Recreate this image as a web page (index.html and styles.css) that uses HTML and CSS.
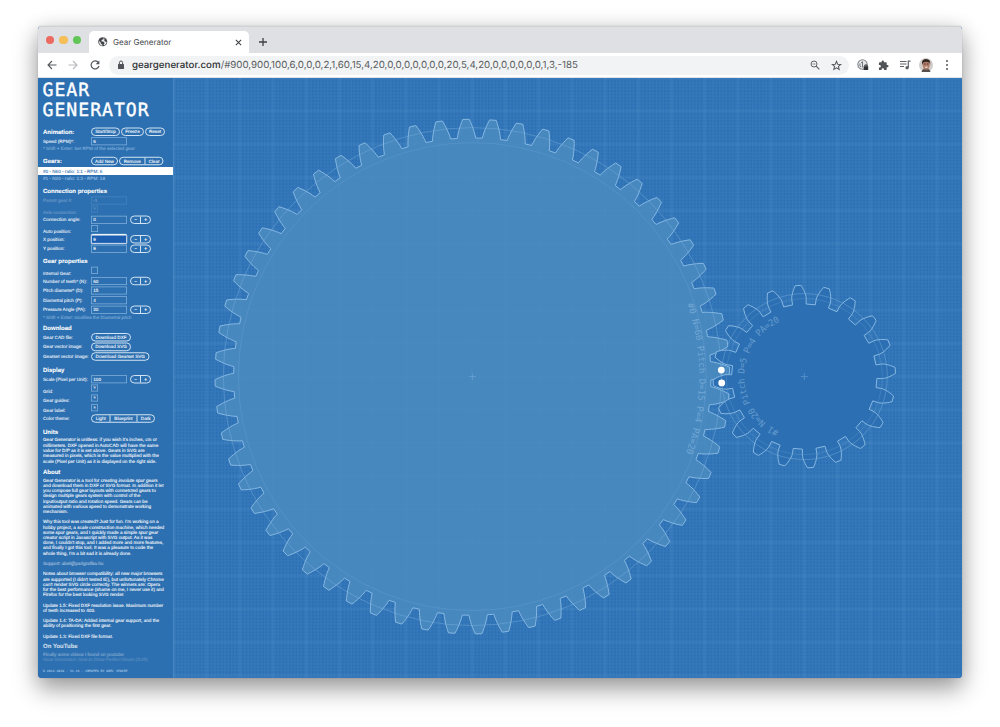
FILE: index.html
```html
<!DOCTYPE html>
<html lang="en">
<head>
<meta charset="utf-8">
<title>Gear Generator</title>
<link rel="stylesheet" href="styles.css">
</head>
<body>
<div class="window">
  <header class="tabstrip">
    <div class="lights"><i class="red"></i><i class="yellow"></i><i class="green"></i></div>
    <div class="tab">
      <svg class="globe" viewBox="0 0 20 20"><circle cx="10" cy="10" r="9.5" fill="#44474b"/><path d="M2 8 L6 12 V14 L9 16 V19 Q2 17 2 8 M8 1 L12 1.500 L11 5 L8 6 L7 9 L12 10 L14 13 L12 15 L13 18 Q18 15 18.500 10 L15 10 L13 7 L14 3" fill="#fff" opacity=".9"/></svg>
      <span class="tabname">Gear Generator</span>
      <svg class="close" viewBox="0 0 8 8"><path d="M1 1 L7 7 M7 1 L1 7" stroke="#3c4043" stroke-width="1.200"/></svg>
    </div>
    <svg class="plus" viewBox="0 0 8 8"><path d="M4 0 V8 M0 4 H8" stroke="#3c4043" stroke-width="1.300"/></svg>
  </header>
  <div class="toolbar">
    <svg class="nav" viewBox="0 0 10 10"><path d="M9.500 5 H1.200 M5 1 L1 5 L5 9" fill="none" stroke="#55585c" stroke-width="1.100"/></svg>
    <svg class="nav" viewBox="0 0 10 10"><path d="M.5 5 H8.800 M5 1 L9 5 L5 9" fill="none" stroke="#b9bbbe" stroke-width="1.100"/></svg>
    <svg class="nav" viewBox="0 0 10 10"><path d="M8.400 2.600 A4 4 0 1 0 9 6" fill="none" stroke="#55585c" stroke-width="1.200"/><path d="M9.400 .5 V4.300 H5.600 Z" fill="#55585c"/></svg>
    <div class="omnibox">
      <svg class="lock" viewBox="0 0 8 10"><rect x="1" y="4" width="6" height="5" rx=".6" fill="#505357"/><path d="M2.400 4 V2.600 a1.600 1.600 0 0 1 3.200 0 V4" fill="none" stroke="#505357"/></svg>
      <span class="url"><b>geargenerator.com</b>/#900,900,100,6,0,0,0,2,1,60,15,4,20,0,0,0,0,0,0,0,20,5,4,20,0,0,0,0,0,0,1,3,-185</span>
      <svg class="mag" viewBox="0 0 10 10"><circle cx="4" cy="4" r="3" fill="none" stroke="#5f6368"/><path d="M6.200 6.200 L9.300 9.300" stroke="#5f6368" stroke-width="1.200"/><path d="M2.600 4 H5.400" stroke="#5f6368" stroke-width=".8"/></svg>
      <svg class="star" viewBox="0 0 24 24"><path d="M12 3 L14.600 9.200 L21.300 9.700 L16.200 14.100 L17.800 20.700 L12 17.200 L6.200 20.700 L7.800 14.100 L2.700 9.700 L9.400 9.200 Z" fill="none" stroke="#55585c" stroke-width="2.200"/></svg>
    </div>
    <svg class="ext" viewBox="0 0 12 12"><circle cx="5.500" cy="5.500" r="4.700" fill="#e5e6e8" stroke="#85888c" stroke-width="1.100"/><path d="M5.500 2.500 V8.500 M4 3.500 H5.500 M3 4.500 a3 3 0 0 0 1 3.500" stroke="#74777b" fill="none"/><rect x="6.700" y="7.200" width="4.500" height="3.800" fill="#303235"/><path d="M7.800 7 V6 h2.300 V7" stroke="#303235" fill="none"/></svg>
    <svg class="ext puzzle" viewBox="0 0 24 24"><path d="M20.500 11H19V7c0-1.100-.9-2-2-2h-4V3.500a2.500 2.500 0 0 0-5 0V5H4a2 2 0 0 0-2 2v3.800h1.500a2.700 2.700 0 0 1 0 5.400H2V20a2 2 0 0 0 2 2h3.800v-1.500a2.700 2.700 0 0 1 5.400 0V22H17a2 2 0 0 0 2-2v-4h1.500a2.500 2.500 0 0 0 0-5z" fill="#505357"/></svg>
    <svg class="ext queue" viewBox="0 0 12 12"><path d="M1 2.500 H7.500 M1 5 H7.500 M1 7.500 H5" stroke="#5f6368" stroke-width="1.100"/><path d="M9.300 8.500 V2.200 H11.500" stroke="#5f6368" stroke-width="1.200" fill="none"/><circle cx="8.100" cy="8.700" r="1.700" fill="#5f6368"/></svg>
    <svg class="avatar" viewBox="0 0 14 14"><circle cx="7" cy="7" r="7" fill="#d3cdc9"/><path d="M2.500 14 Q3 10.800 7 10.500 Q11 10.800 11.500 14" fill="#57504d"/><ellipse cx="7.200" cy="7" rx="3.500" ry="4.800" fill="#b07c68"/><path d="M3.200 7 Q2 1 7 1 Q12 1 11.200 7 L10.500 4.500 Q7 3 4.200 4.500 Z" fill="#2e2522"/><path d="M5 6 H6.500 M8 6 H9.500" stroke="#3c2a25" stroke-width=".8"/><path d="M5.300 8.800 Q7.200 10.500 9.200 8.800 Z" fill="#fff"/></svg>
    <svg class="dots" viewBox="0 0 4 12"><circle cx="2" cy="2" r="1" fill="#55585c"/><circle cx="2" cy="6" r="1" fill="#55585c"/><circle cx="2" cy="10" r="1" fill="#55585c"/></svg>
  </div>
  <main class="page">
    <aside class="sidebar"><div class="side">
      <h1>GEAR<br>GENERATOR</h1>

      <div class="row head first"><h2>Animation:</h2><span class="btn w29">Start/Stop</span><span class="btn w23">Freeze</span><span class="btn w21">Reset</span></div>
      <div class="row speed"><label>Speed (RPM)*:</label><span class="input">6</span></div>
      <p class="note">* Shift + Enter: Set RPM of the selected gear</p>

      <div class="row head gears"><h2>Gears:</h2><span class="btn w27">Add New</span><span class="group"><span class="w26">Remove</span><span class="w19">Clear</span></span></div>
      <div class="gearitem selected">#0 - N60 - ratio: 1:1 - RPM: 6</div>
      <div class="gearitem">#1 - N20 - ratio: 1:3 - RPM: 18</div>

      <div class="row head conn"><h2>Connection properties</h2></div>
      <div class="row speed off"><label>Parent gear #:</label><span class="input">-1</span></div>
      <div class="row check off"><label>Axle connection:</label><span class="box">×</span></div>
      <div class="row"><label>Connection angle:</label><span class="input">0</span><span class="group step"><span>−</span><span>+</span></span></div>
      <div class="row check"><label>Auto position:</label><span class="box"></span></div>
      <div class="row"><label>X position:</label><span class="input focus">9</span><span class="group step"><span>−</span><span>+</span></span></div>
      <div class="row"><label>Y position:</label><span class="input">9</span><span class="group step"><span>−</span><span>+</span></span></div>

      <div class="row head prop"><h2>Gear properties</h2></div>
      <div class="row check"><label>Internal Gear:</label><span class="box"></span></div>
      <div class="row"><label>Number of teeth* (N):</label><span class="input">60</span><span class="group step"><span>−</span><span>+</span></span></div>
      <div class="row"><label>Pitch diameter* (D):</label><span class="input">15</span></div>
      <div class="row"><label>Diametral pitch (P):</label><span class="input">4</span></div>
      <div class="row"><label>Pressure Angle (PA):</label><span class="input">20</span><span class="group step"><span>−</span><span>+</span></span></div>
      <p class="note tight">* Shift + Enter: modifies the Diametral pitch</p>

      <div class="row head down"><h2>Download</h2></div>
      <div class="row"><label>Gear CAD file:</label><span class="btn w40">Download DXF</span></div>
      <div class="row"><label>Gear vector image:</label><span class="btn w40">Download SVG</span></div>
      <div class="row"><label>Gearset vector image:</label><span class="btn w58">Download Gearset SVG</span></div>

      <div class="row head disp"><h2>Display</h2></div>
      <div class="row"><label>Scale (Pixel per Unit):</label><span class="input">100</span><span class="group step"><span>−</span><span>+</span></span></div>
      <div class="row check"><label>Grid:</label><span class="box">×</span></div>
      <div class="row check"><label>Gear guides:</label><span class="box">×</span></div>
      <div class="row check"><label>Gear label:</label><span class="box">×</span></div>
      <div class="row"><label>Color theme:</label><span class="group"><span class="w17">Light</span><span class="w27">Blueprint</span><span class="w17">Dark</span></span></div>

      <div class="row head units"><h2>Units</h2></div>
      <p class="text">Gear Generator is unitless: if you wish it's inches, cm or<br>millimeters. DXF opened in AutoCAD will have the same<br>value for D/P as it is set above. Gears in SVG are<br>measured in pixels, which is the value multiplied with the<br>scale (Pixel per Unit) as it is displayed on the right side.</p>

      <div class="row head about"><h2>About</h2></div>
      <p class="text long">Gear Generator is a tool for creating <i>involute spur gears</i><br>and download them in DXF or SVG format. In addition it let<br>you compose full gear layouts with connetcted gears to<br>design multiple gears system with control of the<br>input/output ratio and rotation speed. Gears can be<br>animated with various speed to demonstrate working<br>mechanism.<br><br>Why this tool was created? Just for fun. I'm working on a<br>hobby project, a <i>scale construction machine</i>, which needed<br>some spur gears, and I quickly made a simple <i>spur gear<br>creator</i> script in Javascript with SVG output. As it was<br>done, I couldn't stop, and I added more and more features,<br>and finally I got this tool. It was a pleasure to code the<br>whole thing, I'm a bit sad it is already done.<br><br><span class="faded">Support: abel@parigrafika.hu</span><br><br>Notes about browser compatibility: all new major browsers<br>are supported (I didn't tested IE), but unfortunately Chrome<br>can't render SVG circle correctly. The winners are: Opera<br>for the best performance (shame on me, I never use it) and<br>Firefox for the best looking SVG render.<br><br>Update 1.5: Fixed DXF resolution issue. Maximum number<br>of teeth increased to 400.<br><br>Update 1.4: TA-DA: Added internal gear support, and the<br>ability of positioning the first gear.<br><br>Update 1.3: Fixed DXF file format.</p>

      <div class="row head tube"><h2>On YouTube</h2></div>
      <p class="text long vids">Finally some videos I found on youtube:<br><span class="ghost">Gear Generator: How to Draw Perfect Gears (3:05)</span></p>
      <footer>© 2014-2020 - V1.16 - CREATED BY ABEL VINCZE</footer>
    </div></aside>
    <svg class="canvas" viewBox="174 78 788 600">
      <defs>
        <pattern id="minor" x="472.300" y="376.600" width="3.320" height="3.320" patternUnits="userSpaceOnUse"><path d="M0 1.660 H3.320 M1.660 0 V3.320" stroke="#69a4d8" stroke-width="1" opacity=".2" fill="none"/></pattern>
        <pattern id="major" x="455.700" y="360" width="33.200" height="33.200" patternUnits="userSpaceOnUse"><path d="M0 16.600 H33.200 M16.600 0 V33.200" stroke="#7fb4e2" stroke-width=".8" opacity=".26" fill="none"/></pattern>
        <path id="arc0" d="M472.300 149.600 A227 227 0 0 1 472.300 603.600"/>
        <path id="arc1" d="M804.300 436.600 A60 60 0 0 1 804.300 316.600"/>
      </defs>
      <rect x="174" y="78" width="788" height="600" fill="url(#minor)"/>
      <rect x="174" y="78" width="788" height="600" fill="url(#major)"/>
      <g id="gears"></g>
      <circle cx="721.300" cy="370.100" r="3.400" fill="#fff"/>
      <circle cx="721.700" cy="382.900" r="3.400" fill="#fff"/>
    </svg>
  </main>
</div>
<script src="gears.js"></script>
</body>
</html>
```

FILE: styles.css
```css
* { box-sizing: border-box; }
body { margin: 0; height: 727px; overflow: hidden; background: #fff; padding: 26px 38px; font-family: "Liberation Sans", Arial, sans-serif; text-rendering: geometricPrecision; }
.window { width: 924px; height: 652px; border-radius: 4px; overflow: hidden; box-shadow: 0 11px 24px rgba(0,0,0,.38), 0 0 20px rgba(0,0,0,.09), 0 0 1px rgba(0,0,0,.4); background: #2d71b3; }
.tabstrip { height: 27px; background: #dee0e4; display: flex; align-items: flex-end; font-family: Inter, sans-serif; border-top: 1px solid #d0d2d5; }
.lights { display: flex; gap: 5.200px; padding: 0 8px 9px; width: 51px; }
.lights i { width: 8.200px; height: 8.200px; border-radius: 50%; flex: none; }
.red { background: #ec6a60; }
.yellow { background: #f4bf56; }
.green { background: #62c656; }
.tab { width: 160px; height: 22px; border-radius: 5px 5px 0 0; background: #fff; display: flex; align-items: center; padding: 0 7px 0 9px; }
.globe { width: 9.500px; height: 9.500px; }
.tabname { font-size: 8px; color: #45484c; margin-left: 5.500px; flex: 1; white-space: nowrap; }
.close { width: 7px; height: 7px; }
.plus { width: 8px; height: 8px; margin: 0 0 7px 10px; }
.toolbar { height: 25px; background: #fff; display: flex; align-items: center; padding-left: 9px; border-bottom: 1px solid #dfe3e8; }
.nav { width: 10px; height: 10px; margin-right: 11.300px; flex: none; }
.omnibox { width: 740px; flex: none; height: 19px; margin-left: -2px; border-radius: 10px; background: #f1f3f4; display: flex; align-items: center; padding: 0 7px 0 8px; font-family: Inter, sans-serif; }
.lock { width: 8px; height: 10px; }
.url { flex: 1; margin-left: 7px; padding-top: 1px; font-size: 9.730px; color: #5b5e62; white-space: nowrap; }
.url b { font-weight: 500; color: #2b2d30; }
.mag { width: 10px; height: 10px; margin-right: 11px; }
.star { width: 11px; height: 11px; }
.ext { width: 12px; height: 12px; margin-left: 8.500px; flex: none; }
.puzzle { width: 11px; height: 11px; }
.queue { margin-left: 10px; }
.avatar { width: 14px; height: 14px; margin-left: 8px; flex: none; }
.dots { width: 4px; height: 12px; margin-left: 12.500px; flex: none; }

.page { display: flex; height: 600px; }
.sidebar { width: 136px; height: 600px; flex: none; overflow: hidden; background: #2d70b1; }
/* Laid out four times larger and scaled down, so tiny type keeps exact metrics. */
.side { width: 136px; height: 600px; zoom: 4; transform: scale(.25); transform-origin: 0 0; padding: 2px 0 0 5px; color: #fff; border-right: 1px solid #4788c2; font-size: 4.630px; -webkit-text-stroke: .08px currentColor; white-space: nowrap; overflow: hidden; display: flex; flex-direction: column; }
.side > * { flex: none; }
.canvas { width: 788px; height: 600px; display: block; background: #2c70b4; }
h1 { margin: 0 0 7.400px -.5px; font: 400 18.200px/19.700px "DejaVu Sans Mono", monospace; letter-spacing: .95px; -webkit-text-stroke: .35px #fff; }
h2 { margin: 0; font-size: 6px; line-height: 8px; width: 48px; }
.row { height: 9.600px; display: flex; align-items: center; }
.row label { width: 48px; line-height: 6px; color: #f2f7fc; }
.head { height: 10px; }
.speed { height: 9px; }
.check { height: 9.900px; align-items: flex-start; }
.check label { align-self: flex-end; }
.off { opacity: .3; }
.gears { margin-top: 4.200px; }
.conn { margin-top: 3.800px; }
.prop { margin-top: 2.700px; }
.down { margin-top: 3px; height: 9.600px; }
.disp { margin-top: 3.600px; height: 9.600px; }
.units { margin-top: 3.600px; }
.about { margin-top: 3.500px; }
.tube { margin-top: 2.200px; opacity: .75; }
.note { margin: 0; height: 6px; line-height: 6px; color: #83b2dc; }
.tight { height: 5.300px; line-height: 5.300px; }
.gearitem { height: 7.200px; line-height: 7.200px; margin-left: -5px; padding-left: 5px; color: #9dc2e4; }
.selected { height: 8px; line-height: 8px; margin-top: 1px; background: #fff; color: #2d70b1; }
.btn, .group { height: 8.600px; line-height: 6.600px; border: 1px solid #d2e3f3; border-radius: 4.300px; text-align: center; display: flex; justify-content: center; margin-right: 1px; }
.group > span + span { border-left: 1px solid #d2e3f3; }
.group > span { text-align: center; }
.step { width: 21px; margin-left: 3px; font-weight: bold; }
.step > span { flex: 1; }
.input { width: 36px; height: 8px; line-height: 6.400px; border: .8px solid #82b0da; padding-left: 1.500px; }
.focus { border-color: #fff; background: #1c5eb0; border-radius: 1.500px; height: 9px; line-height: 7px; box-shadow: 0 0 1px #fff; }
.box { width: 7px; height: 7px; margin-top: .5px; line-height: 5px; border: .8px solid #82b0da; text-align: center; }
.w17 { width: 17.500px; } .w19 { width: 18px; } .w21 { width: 20px; } .w23 { width: 23px; } .w26 { width: 24.500px; } .w27 { width: 27px; } .w29 { width: 29px; } .w40 { width: 40px; } .w58 { width: 58.500px; }
.text { margin: 0; line-height: 5.300px; }
.long { line-height: 5.200px; margin-top: .7px; }
.vids { opacity: .4; }
.faded { opacity: .55; }
.ghost { opacity: .5; font-style: italic; }
footer { margin-top: 6.500px; font: 3.200px/5px "Liberation Mono", monospace; color: #a3c6e6; }

.gear { stroke: #86b8e2; stroke-width: 1; stroke-linejoin: round; }
.gear0 { fill: #4788bf; }
.gear1 { fill: #2c6fb2; fill-opacity: .95; }
.guide { fill: none; stroke: #79afdd; stroke-width: .8; opacity: .55; }
.base { opacity: .3; }
.cross { stroke: #86b8e2; stroke-width: .7; opacity: .6; }
.label { font: 9px "DejaVu Sans Mono", monospace; fill: #9cc6e8; opacity: .5; }
```

FILE: gears.js
```js
// Draws involute spur gears; all lengths are in gear units times SCALE.
const SCALE = 33.2;
const NS = "http://www.w3.org/2000/svg";
const host = document.getElementById("gears");

function add(name, attrs, text) {
  const el = document.createElementNS(NS, name);
  for (const key in attrs) el.setAttribute(key, attrs[key]);
  if (text) el.textContent = text;
  host.appendChild(el);
  return el;
}

function gearPath(cx, cy, n, pitch, pa, phase) {
  const rp = n / pitch / 2 * SCALE;
  const ro = rp + SCALE / pitch;
  const rr = rp - 1.25 * SCALE / pitch;
  const rb = rp * Math.cos(pa);
  const inv = a => Math.tan(a) - a;
  const half = r => Math.PI / (2 * n) + inv(pa) - inv(Math.acos(Math.min(1, rb / r)));
  const flank = [[rr, half(Math.max(rr, rb))]];
  const start = Math.max(rr, rb);
  for (let i = 0; i <= 6; i++) {
    const r = start + (ro - start) * i / 6;
    flank.push([r, half(r)]);
  }
  const pts = [];
  for (let k = 0; k < n; k++) {
    const mid = phase + k * 2 * Math.PI / n;
    const put = (r, a) => pts.push((cx + r * Math.cos(a)).toFixed(2) + " " + (cy + r * Math.sin(a)).toFixed(2));
    flank.forEach(f => put(f[0], mid - f[1]));
    flank.slice().reverse().forEach(f => put(f[0], mid + f[1]));
  }
  return "M" + pts.join("L") + "Z";
}

const PA = 20 * Math.PI / 180;
const gears = [
  { x: 472.3, n: 60, phase: -1.4, label: "#0 N=60 Pitch D=15 P=4 PA=20", angle: 71.3, length: 152 },
  { x: 804.3, n: 20, phase: -3.9, label: "#1 N=20 Pitch D=5 P=4 PA=20", angle: 25, length: 137 }
];

gears.forEach((g, i) => {
  const y = 376.6;
  const rp = g.n / 8 * SCALE;
  add("path", { class: "gear gear" + i, d: gearPath(g.x, y, g.n, 4, PA, g.phase * Math.PI / 180) });
  if (i === 0) add("circle", { cx: g.x, cy: y, r: 257, fill: "url(#major)", opacity: 0.25 });
  add("circle", { class: "guide", cx: g.x, cy: y, r: rp });
  add("circle", { class: "guide base", cx: g.x, cy: y, r: rp * Math.cos(PA) });
  add("path", { class: "cross", d: `M${g.x - 3.5} ${y}h7M${g.x} ${y - 3.5}v7` });
  const radius = i === 0 ? 227 : 60;
  const text = add("text", { class: "label" });
  const path = document.createElementNS(NS, "textPath");
  path.setAttribute("href", "#arc" + i);
  path.setAttribute("startOffset", g.angle * Math.PI / 180 * radius);
  path.setAttribute("textLength", g.length);
  path.textContent = g.label;
  text.appendChild(path);
});
```
